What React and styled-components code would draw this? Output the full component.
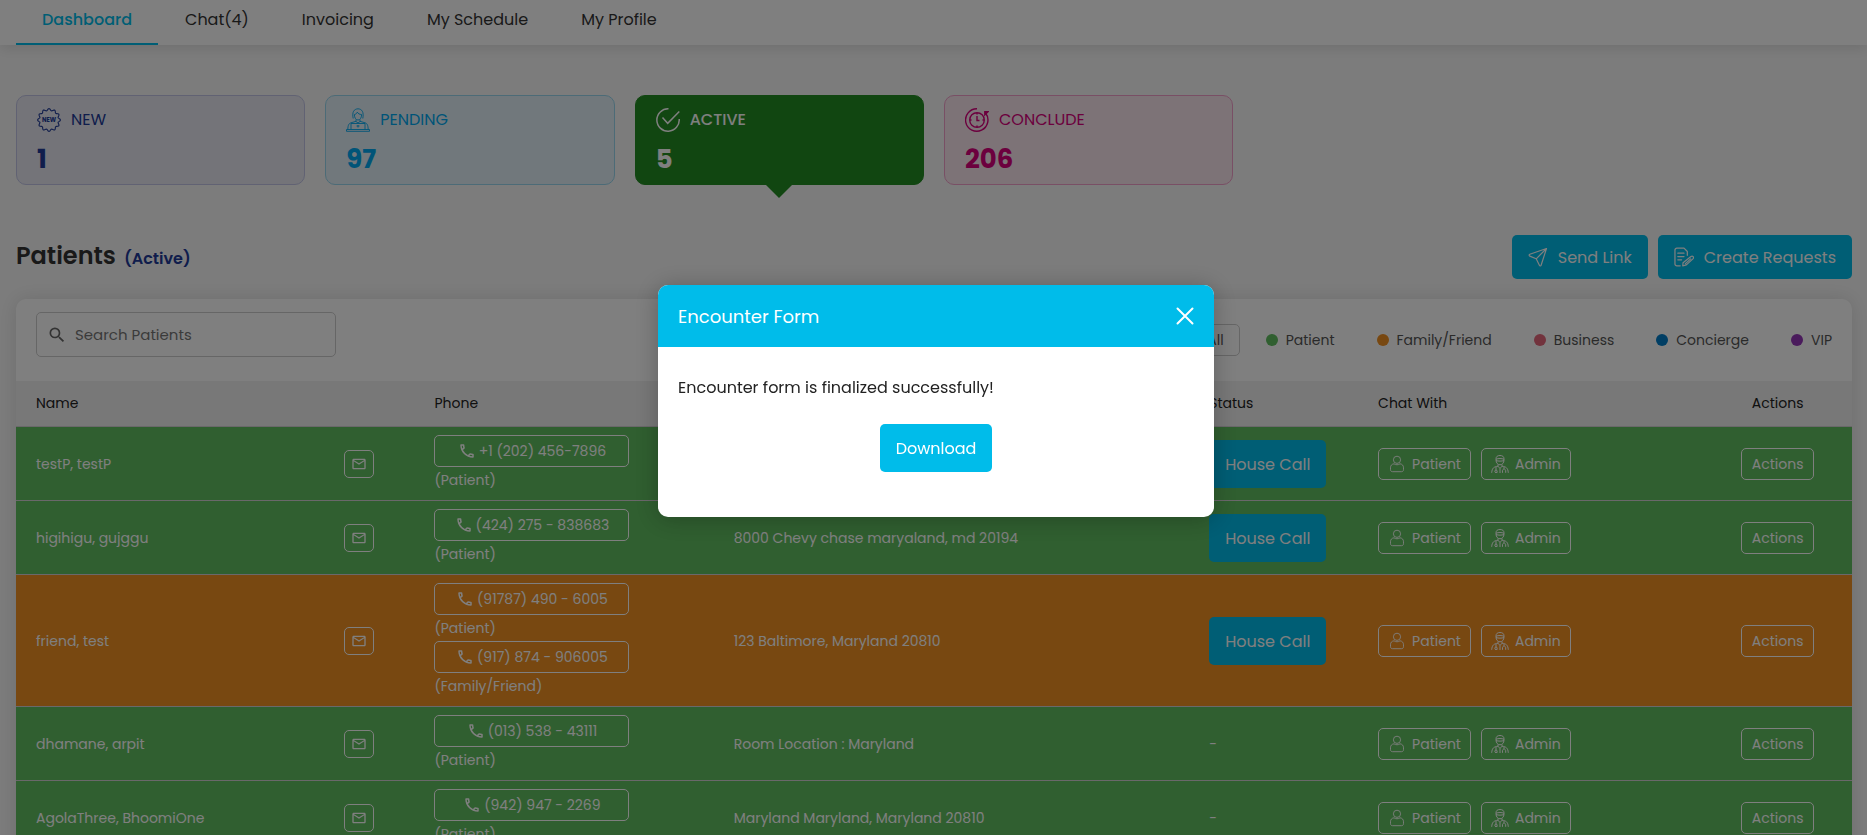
import React from "react";
import styled, { createGlobalStyle } from "styled-components";
import { MdOutlineCall, MdMailOutline, MdSearch } from "react-icons/md";

const GlobalStyle = createGlobalStyle`
  *, *::before, *::after { box-sizing: border-box; }
  body {
    margin: 0;
    background: #f9f9f9;
    color: #333;
    font-family: Poppins, Inter, "Open Sans", sans-serif;
    font-size: 16px;
    font-weight: 400;
  }
  button, input { font: inherit; color: inherit; }
  button { cursor: pointer; }
  svg { flex: none; display: block; }
`;

const Page = styled.div`
  height: 100vh;
  overflow: hidden;
`;

const Nav = styled.nav`
  display: flex;
  gap: 1px;
  height: 45px;
  padding: 0 16px;
  background: #fff;
  box-shadow: 0 4px 12px rgba(0, 0, 0, 0.1);
`;

const Tab = styled.a`
  padding: 8px 26px 0;
  line-height: 24px;
  text-decoration: none;
  font-weight: ${(p) => (p.$active ? 500 : 400)};
  color: ${(p) => (p.$active ? "#00bcea" : "#333")};
  border-bottom: 2px solid ${(p) => (p.$active ? "#00bcea" : "transparent")};
`;

const Main = styled.main`
  padding: 50px 15px 0 16px;
`;

const Stats = styled.div`
  display: grid;
  grid-template-columns: repeat(6, 1fr);
  gap: 20px;
`;

const StatCard = styled.button`
  position: relative;
  display: flex;
  flex-direction: column;
  gap: 10px;
  height: 90px;
  padding: 12px 20px 8px;
  text-align: left;
  border: 1px solid ${(p) => p.$border};
  border-radius: 10px;
  background: ${(p) => p.$bg};
  color: ${(p) => p.$color};

  &::after {
    content: "";
    display: ${(p) => (p.$active ? "block" : "none")};
    position: absolute;
    top: 100%;
    left: 50%;
    margin-left: -14px;
    border: 14px solid transparent;
    border-bottom-width: 0;
    border-top-color: ${(p) => p.$bg};
  }
`;

const StatLabel = styled.span`
  display: flex;
  align-items: center;
  gap: 10px;
  line-height: 24px;
  font-weight: ${(p) => (p.$active ? 500 : 400)};
`;

const StatValue = styled.span`
  font-size: 26px;
  line-height: 34px;
  font-weight: 700;
`;

const TitleRow = styled.div`
  display: flex;
  align-items: center;
  justify-content: space-between;
  margin: 50px 0 20px;
`;

const Title = styled.h1`
  margin: 0;
  font-size: 24px;
  line-height: 36px;
  font-weight: 600;
  color: #333;
`;

const TitleState = styled.span`
  margin-left: 8px;
  font-size: 16px;
  color: #203a98;
`;

const ButtonGroup = styled.div`
  display: flex;
  gap: 10px;
`;

const PrimaryButton = styled.button`
  display: inline-flex;
  align-items: center;
  justify-content: center;
  gap: 10px;
  height: ${(p) => (p.$tall ? 48 : 44)}px;
  padding: 0 16px;
  border: 0;
  border-radius: 5px;
  background: #00bcea;
  color: #fff;
  font-size: 16px;
  white-space: nowrap;
`;

const Panel = styled.section`
  border-radius: 10px 10px 0 0;
  background: #fff;
  box-shadow: 0 0 20px rgba(0, 0, 0, 0.12);
`;

const Toolbar = styled.div`
  display: flex;
  justify-content: space-between;
  height: 82px;
  padding: 13px 20px 0;
`;

const SearchBox = styled.label`
  display: flex;
  align-items: center;
  gap: 8px;
  width: 300px;
  height: 45px;
  padding: 0 10px;
  border: 1px solid #ccc;
  border-radius: 5px;
  color: #666;

  input {
    flex: 1;
    min-width: 0;
    padding: 0;
    border: 0;
    outline: 0;
    background: none;
    font-size: 15px;
  }
  input::placeholder { color: #777; opacity: 1; }
`;

const Filters = styled.div`
  display: flex;
  align-items: center;
  gap: 26px;
  height: 56px;
`;

const Legend = styled.div`
  display: flex;
  gap: 42px;
`;

const FilterButton = styled.button`
  display: flex;
  align-items: center;
  gap: 8px;
  height: 32px;
  padding: ${(p) => (p.$boxed ? "0 15px" : "0")};
  border: ${(p) => (p.$boxed ? "1px solid #ccc" : "0")};
  border-radius: 5px;
  background: none;
  color: #555;
  font-size: 14px;
  white-space: nowrap;
`;

const Dot = styled.span`
  width: 12px;
  height: 12px;
  border-radius: 50%;
  background: ${(p) => p.$color};
`;

const Table = styled.table`
  width: 100%;
  table-layout: fixed;
  border-spacing: 0;
  font-size: 14px;
`;

const HeadCell = styled.th`
  height: 46px;
  padding: 0 0 0 ${(p) => (p.$center ? 0 : 20)}px;
  border-bottom: 1px solid #d5d0d5;
  background: #f1f1f1;
  text-align: ${(p) => (p.$center ? "center" : "left")};
  font-weight: 400;
  color: #222;
`;

const Row = styled.tr`
  background: ${(p) => p.$color};
  color: #fff;
`;

const Cell = styled.td`
  padding: 8px 0 7px ${(p) => (p.$center ? 0 : 20)}px;
  border-bottom: 1px solid #d5d0d5;
  text-align: ${(p) => (p.$center ? "center" : "left")};
`;

const OutlineButton = styled.button`
  display: inline-flex;
  align-items: center;
  justify-content: center;
  gap: 6px;
  height: 32px;
  padding: 0 10px;
  border: 1px solid #fff;
  border-radius: 5px;
  background: none;
  white-space: nowrap;
`;

const ChatButton = styled(OutlineButton)`
  padding: 0 9px;
`;

const MailButton = styled(OutlineButton)`
  width: 30px;
  height: 28px;
  padding: 0;
  vertical-align: middle;
`;

const PhoneButton = styled(OutlineButton)`
  display: flex;
  gap: 3px;
  width: 195px;
`;

const PhoneKind = styled.div`
  line-height: 26px;
`;

const ChatButtons = styled.div`
  display: flex;
  gap: 10px;
`;

const Overlay = styled.div`
  position: fixed;
  inset: 0;
  display: flex;
  justify-content: center;
  align-items: flex-start;
  padding: 285px 15px 20px 20px;
  background: rgba(0, 0, 0, 0.5);
`;

const Dialog = styled.div`
  width: 556px;
  overflow: hidden;
  border-radius: 10px;
  background: #fff;
  color: #222;
  box-shadow: 0 2px 24px rgba(0, 0, 0, 0.25);
`;

const DialogHeader = styled.header`
  display: flex;
  align-items: center;
  justify-content: space-between;
  height: 62px;
  padding: 0 20px;
  background: #00bcea;
  color: #fff;
`;

const DialogTitle = styled.h2`
  margin: 0;
  font-size: 18px;
  font-weight: 400;
`;

const CloseButton = styled.button`
  padding: 0;
  border: 0;
  background: none;
`;

const DialogBody = styled.div`
  display: flex;
  flex-direction: column;
  align-items: center;
  gap: 24px;
  padding: 29px 20px 45px;
`;

const Message = styled.p`
  width: 100%;
  margin: 0;
  line-height: 24px;
`;

const badgePoints = Array.from({ length: 96 }, (_, i) => {
  const angle = (i / 96) * Math.PI * 2;
  const r = 10.4 + 1 * Math.cos(angle * 12);
  return `${(12 + r * Math.cos(angle)).toFixed(2)},${(12 + r * Math.sin(angle)).toFixed(2)}`;
}).join(" ");

const NewIcon = () => (
  <svg width="24" height="24" viewBox="0 0 24 24" fill="none" stroke="currentColor">
    <polygon points={badgePoints} strokeLinejoin="round" strokeWidth="1.1" />
    <text x="12" y="14.3" fontSize="6" fontWeight="700" textAnchor="middle" fill="currentColor" stroke="none">
      NEW
    </text>
  </svg>
);

const PendingIcon = () => (
  <svg width="24" height="24" viewBox="0 0 24 24" fill="none" stroke="currentColor" strokeWidth="0.9">
    <path d="M7.2 10.5C5.800 4 8 1 12 .8c4 .2 6 3.200 4.800 9.700" />
    <path d="M8.400 6.500c0 3.500 1.500 5.500 3.600 5.500s3.600-2 3.600-5.500c-2 0-3.600-.8-4.300-2.400-.5 1.400-1.500 2.200-2.900 2.400Z" />
    <path d="M10 11.500v2l2 1.500 2-1.500v-2M10 13.300l-5 1.500C2.800 15.500 2 17 1.800 21.500M14 13.300l5 1.500c2.200.700 3 2.200 3.200 6.700" />
    <path d="M5 21.500v-6h14v6M10.500 18h3M12 17v2.500" />
    <path d="M.5 21.500h23v1.800H.5z" />
  </svg>
);

const ActiveIcon = () => (
  <svg width="24" height="24" viewBox="0 0 24 24" fill="none" stroke="currentColor" strokeWidth="1.5">
    <path d="M12.500.8A11.200 11.200 0 1 0 23.200 11" />
    <path d="m6.500 9.500 5.200 5.800L23.300 3.500" />
  </svg>
);

const ConcludeIcon = () => (
  <svg width="24" height="24" viewBox="0 0 24 24" fill="none" stroke="currentColor" strokeWidth="1.400">
    <path d="M12 .8A11.200 11.200 0 1 0 20.500 5" />
    <path d="M19.800 6.800V3.600h3.400Z" fill="currentColor" />
    <circle cx="12" cy="12" r="7.300" />
    <path d="M12 8v4.500h2.500M12 5v1.500M12 17.500V19M5 12h1.500M17.500 12H19" />
  </svg>
);

const SendIcon = () => (
  <svg width="20" height="20" viewBox="0 0 20 20" fill="none" stroke="currentColor" strokeWidth="1.200" strokeLinejoin="round">
    <path d="M18.500 1.500 1.800 7.300c-.9.400-.9 1.400 0 1.800l6.400 2.700 3.200 6.500c.4.800 1.400.7 1.700-.1L18.500 1.500ZM18.500 1.500 8.200 11.800" />
  </svg>
);

const CreateIcon = () => (
  <svg width="20" height="20" viewBox="0 0 21 20" fill="none" stroke="currentColor" strokeWidth="1.300" strokeLinecap="round" strokeLinejoin="round">
    <path d="M6.500 19.300H3A2 2 0 0 1 1 17.300V2.700a2 2 0 0 1 2-2h7.500L14 4.200v4" />
    <path d="M4 6h6.500M4 9.500h6.500M4 13h4" />
    <path d="m9.500 16 8.300-6.500c1.800-1.200 3.400.7 2.300 2.200L13 18.300l-3.800 1 .3-3.300ZM12 17l5.500-5" />
  </svg>
);

const PersonIcon = () => (
  <svg width="18" height="18" viewBox="0 0 18 18" fill="none" stroke="currentColor" strokeWidth="0.9">
    <circle cx="9" cy="4.800" r="3.600" />
    <path d="M6 8.800c-2.300.3-3.500 1.800-3.500 4v1.900c0 1.200.8 2 2 2h9c1.200 0 2-.8 2-2v-1.900c0-2.200-1.200-3.700-3.500-4-1.800 1.300-4.200 1.300-6 0Z" />
  </svg>
);

const DoctorIcon = () => (
  <svg width="18" height="18" viewBox="0 0 18 18" fill="none" stroke="currentColor" strokeWidth="1">
    <path d="M5 3.800C5 1.500 6.600.5 9 .5s4 1 4 3.300v1.400c0 2.600-1.800 4.600-4 4.600S5 7.800 5 5.200ZM5 4.200c2.500-.9 5.500-.9 8 0M5 5.600c2.500.7 5.500.7 8 0" />
    <path d="M7 9.500v1.700l2 2.300 2-2.300V9.500M7 11.200c-4 .5-6 1.800-6.300 6.600M11 11.200c4 .5 6 1.800 6.300 6.600M9 13.500V18M5 11.800v3.400M13 11.800v2M11.500 17.800v-2c0-2.300 3.200-2.300 3.200 0v2M4 17.800h2.500" />
    <circle cx="5" cy="16.300" r="1.200" />
  </svg>
);

const CloseIcon = () => (
  <svg width="18" height="18" viewBox="0 0 18 18" fill="none" stroke="currentColor" strokeWidth="2" strokeLinecap="round">
    <path d="m1.500 1.500 15 15M16.500 1.500l-15 15" />
  </svg>
);

const tabs = ["Dashboard", "Chat(4)", "Invoicing", "My Schedule", "My Profile"];

const stats = [
  { label: "NEW", value: 1, Icon: NewIcon, color: "#203a98", bg: "#e8e9f2", border: "#c2c5e6" },
  { label: "PENDING", value: 97, Icon: PendingIcon, color: "#00a8f0", bg: "#e2f1f8", border: "#98d6ee" },
  { label: "ACTIVE", value: 5, Icon: ActiveIcon, color: "#fff", bg: "#228c22", border: "#228c22", active: true },
  { label: "CONCLUDE", value: 206, Icon: ConcludeIcon, color: "#d8007c", bg: "#fae6ee", border: "#f29fca" },
];

const GREEN = "#60be60";
const ORANGE = "#f09022";

const legend = [
  ["Patient", GREEN],
  ["Family/Friend", ORANGE],
  ["Business", "#e4667a"],
  ["Concierge", "#007cc8"],
  ["VIP", "#9436b8"],
];

const columns = [
  ["Name", "16.8%"],
  ["", "4.9%"],
  ["Phone", "16.3%"],
  ["Address", "25.9%"],
  ["Status", "9.2%"],
  ["Chat With", "18.8%"],
  ["Actions", "8.1%"],
];

const patients = [
  { name: "testP, testP", phones: [["+1 (202) 456-7896", "Patient"]], address: "", houseCall: true },
  { name: "higihigu, gujggu", phones: [["(424) 275 - 838683", "Patient"]], address: "8000 Chevy chase maryaland, md 20194", houseCall: true },
  {
    name: "friend, test",
    phones: [["(91787) 490 - 6005", "Patient"], ["(917) 874 - 906005", "Family/Friend"]],
    address: "123 Baltimore, Maryland 20810",
    houseCall: true,
    color: ORANGE,
  },
  { name: "dhamane, arpit", phones: [["(013) 538 - 43111", "Patient"]], address: "Room Location : Maryland" },
  { name: "AgolaThree, BhoomiOne", phones: [["(942) 947 - 2269", "Patient"]], address: "Maryland Maryland, Maryland 20810" },
];

function PatientRow({ patient }) {
  return (
    <Row $color={patient.color || GREEN}>
      <Cell>{patient.name}</Cell>
      <Cell>
        <MailButton aria-label={`Email ${patient.name}`}>
          <MdMailOutline size={16} />
        </MailButton>
      </Cell>
      <Cell>
        {patient.phones.map(([number, kind]) => (
          <React.Fragment key={number}>
            <PhoneButton>
              <MdOutlineCall size={18} />
              {number}
            </PhoneButton>
            <PhoneKind>({kind})</PhoneKind>
          </React.Fragment>
        ))}
      </Cell>
      <Cell>{patient.address}</Cell>
      <Cell>{patient.houseCall ? <PrimaryButton $tall>House Call</PrimaryButton> : "-"}</Cell>
      <Cell>
        <ChatButtons>
          <ChatButton>
            <PersonIcon />
            Patient
          </ChatButton>
          <ChatButton>
            <DoctorIcon />
            Admin
          </ChatButton>
        </ChatButtons>
      </Cell>
      <Cell $center>
        <OutlineButton>Actions</OutlineButton>
      </Cell>
    </Row>
  );
}

export default function App() {
  return (
    <>
      <GlobalStyle />
      <Page>
        <Nav>
          {tabs.map((tab, i) => (
            <Tab key={tab} href="#" $active={i === 0}>
              {tab}
            </Tab>
          ))}
        </Nav>
        <Main>
          <Stats>
            {stats.map(({ label, value, Icon, color, bg, border, active }) => (
              <StatCard key={label} $color={color} $bg={bg} $border={border} $active={active}>
                <StatLabel $active={active}>
                  <Icon />
                  {label}
                </StatLabel>
                <StatValue>{value}</StatValue>
              </StatCard>
            ))}
          </Stats>
          <TitleRow>
            <Title>
              Patients<TitleState>(Active)</TitleState>
            </Title>
            <ButtonGroup>
              <PrimaryButton>
                <SendIcon />
                Send Link
              </PrimaryButton>
              <PrimaryButton>
                <CreateIcon />
                Create Requests
              </PrimaryButton>
            </ButtonGroup>
          </TitleRow>
          <Panel>
            <Toolbar>
              <SearchBox>
                <MdSearch size={20} />
                <input type="search" aria-label="Search Patients" placeholder="Search Patients" />
              </SearchBox>
              <Filters>
                <FilterButton $boxed>All</FilterButton>
                <Legend>
                  {legend.map(([label, color]) => (
                    <FilterButton key={label}>
                      <Dot $color={color} />
                      {label}
                    </FilterButton>
                  ))}
                </Legend>
              </Filters>
            </Toolbar>
            <Table>
              <colgroup>
                {columns.map(([label, width]) => (
                  <col key={label} width={width} />
                ))}
              </colgroup>
              <thead>
                <tr>
                  {columns.map(([label]) => (
                    <HeadCell key={label} $center={label === "Actions"}>
                      {label}
                    </HeadCell>
                  ))}
                </tr>
              </thead>
              <tbody>
                {patients.map((patient) => (
                  <PatientRow key={patient.name} patient={patient} />
                ))}
              </tbody>
            </Table>
          </Panel>
        </Main>
      </Page>
      <Overlay>
        <Dialog role="dialog" aria-modal="true" aria-labelledby="dialog-title">
          <DialogHeader>
            <DialogTitle id="dialog-title">Encounter Form</DialogTitle>
            <CloseButton aria-label="Close">
              <CloseIcon />
            </CloseButton>
          </DialogHeader>
          <DialogBody>
            <Message>Encounter form is finalized successfully!</Message>
            <PrimaryButton $tall>Download</PrimaryButton>
          </DialogBody>
        </Dialog>
      </Overlay>
    </>
  );
}
